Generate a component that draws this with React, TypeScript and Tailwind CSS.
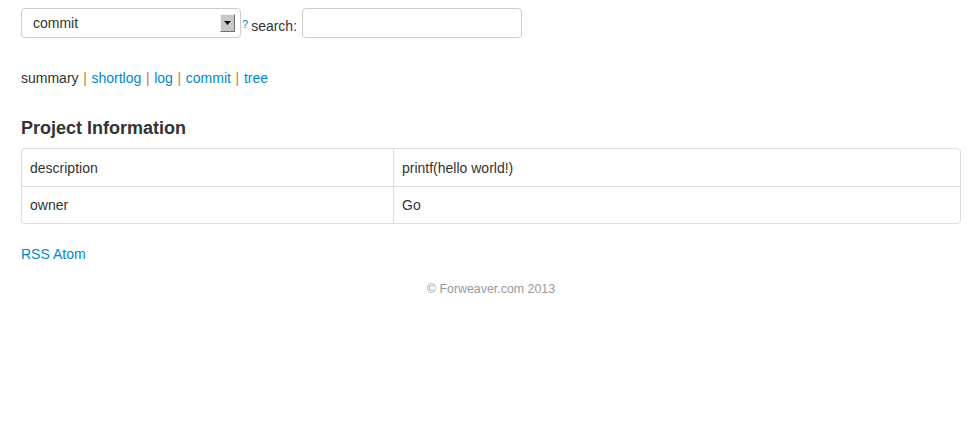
const Sep = () => <span className="text-[#c8783c] px-[0.75px]"> | </span>;

const App = () => {
  return (
    <div className="min-h-screen bg-white font-['Liberation_Sans',Arial,sans-serif] text-[14px] leading-[20px] text-[#333]">
      <div className="w-[940px] ml-[21px]">
        <form className="pt-[8px] flex items-center">
          <div className="relative w-[220px] h-[30px] rounded-[4px] border border-[#ccc] bg-white flex items-center pl-[11px]">
            <span>commit</span>
            <div className="absolute left-[198px] top-[5px] w-[15px] h-[18px] bg-[#c8c8c8] border border-t-[#f2f2f2] border-l-[#f2f2f2] border-r-[#6e6e6e] border-b-[#6e6e6e] flex items-center justify-center">
              <svg width="7" height="4" viewBox="0 0 7 4"><path d="M0 0h7L3.5 4z" fill="#111" /></svg>
            </div>
          </div>
          <a className="text-[#0088cc] text-[11px] self-start mt-[6px] ml-[1px]">?</a>
          <span className="ml-[3px] mt-[5px]">search:</span>
          <input className="ml-[5px] w-[220px] h-[30px] rounded-[4px] border border-[#ccc] outline-none" />
        </form>

        <div className="mt-[30px]">
          summary<Sep /><a className="text-[#0088cc]">shortlog</a><Sep /><a className="text-[#0088cc]">log</a><Sep /><a className="text-[#0088cc]">commit</a><Sep /><a className="text-[#0088cc]">tree</a>
        </div>

        <h3 className="mt-[30px] text-[18px] leading-[20px] font-bold text-[#333]">Project Information</h3>

        <div className="mt-[10px] border border-[#ddd] rounded-[4px] overflow-hidden">
          <div className="flex border-b border-[#ddd]">
            <div className="w-[372px] px-[8px] pt-[9px] pb-[8px] border-r border-[#ddd]">description</div>
            <div className="px-[8px] pt-[9px] pb-[8px]">printf(hello world!)</div>
          </div>
          <div className="flex">
            <div className="w-[372px] px-[8px] py-[8px] border-r border-[#ddd]">owner</div>
            <div className="px-[8px] py-[8px]">Go</div>
          </div>
        </div>

        <div className="mt-[20px]">
          <a className="text-[#0088cc]">RSS</a> <a className="text-[#0088cc]">Atom</a>
        </div>

        <footer className="mt-[15px] text-center text-[12.4px] text-[#999]">© Forweaver.com 2013</footer>
      </div>
    </div>
  );
};

export default App;
